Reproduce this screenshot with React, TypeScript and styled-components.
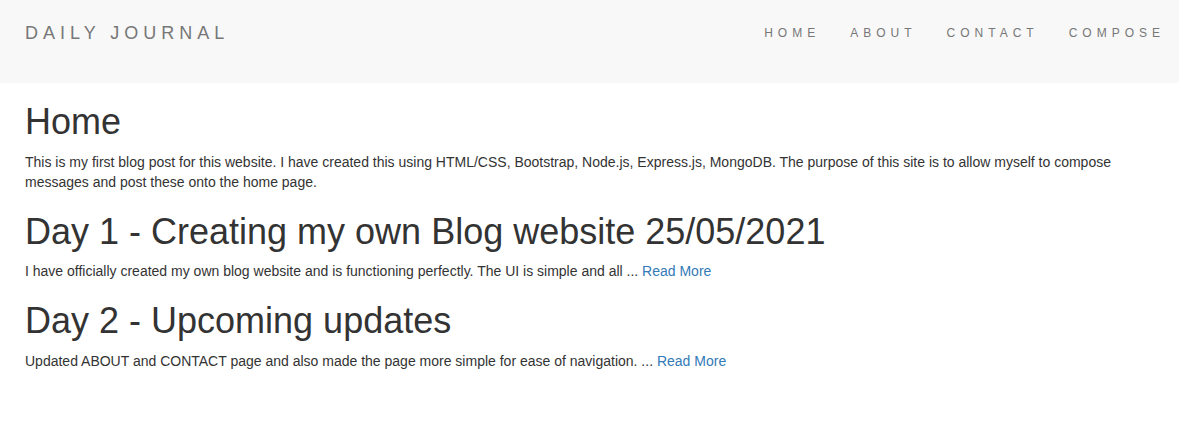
import React from "react";
import styled, { createGlobalStyle } from "styled-components";

const GlobalStyle = createGlobalStyle`
  html, body {
    margin: 0;
    padding: 0;
    background: #ffffff;
  }
  body {
    font-family: "Liberation Sans", Arial, Helvetica, sans-serif;
    font-size: 14px;
    line-height: 1.42857143;
    color: #333333;
  }
  * { box-sizing: border-box; }
`;

const Navbar = styled.nav`
  display: flex;
  justify-content: space-between;
  align-items: flex-start;
  height: 83px;
  padding: 23px 0 0 25px;
  background: #f8f8f8;
  overflow: hidden;
`;

const Brand = styled.a`
  font-size: 18px;
  line-height: 20px;
  letter-spacing: 5px;
  color: #777777;
  text-decoration: none;
  white-space: nowrap;
`;

const NavList = styled.ul`
  display: flex;
  list-style: none;
  margin: 0 -1px 0 0;
  padding: 0;
`;

const NavLink = styled.a`
  display: block;
  padding: 0 15px;
  font-size: 12px;
  line-height: 20px;
  letter-spacing: 5px;
  color: #777777;
  text-decoration: none;
  white-space: nowrap;
`;

const Main = styled.main`
  padding: 0 25px;
`;

const Title = styled.h1`
  margin: 20px 0 10px;
  font-size: 36px;
  font-weight: 500;
  line-height: 1.1;
  color: #333333;

  &:first-child {
    margin-top: 19px;
  }
`;

const Text = styled.p`
  margin: 0 0 10px;
`;

const More = styled.a`
  color: #337ab7;
  text-decoration: none;
`;

const posts = [
  {
    title: "Day 1 - Creating my own Blog website 25/05/2021",
    body: "I have officially created my own blog website and is functioning perfectly. The UI is simple and all ...",
  },
  {
    title: "Day 2 - Upcoming updates",
    body: "Updated ABOUT and CONTACT page and also made the page more simple for ease of navigation. ...",
  },
];

export default function App() {
  return (
    <>
      <GlobalStyle />
      <Navbar>
        <Brand href="#">DAILY JOURNAL</Brand>
        <NavList>
          {["HOME", "ABOUT", "CONTACT", "COMPOSE"].map((l) => (
            <li key={l}>
              <NavLink href="#">{l}</NavLink>
            </li>
          ))}
        </NavList>
      </Navbar>
      <Main>
        <Title>Home</Title>
        <Text>
          This is my first blog post for this website. I have created this using HTML/CSS, Bootstrap, Node.js, Express.js, MongoDB. The purpose of this site is to allow myself to compose messages and post these onto the home page.
        </Text>
        {posts.map((p) => (
          <React.Fragment key={p.title}>
            <Title>{p.title}</Title>
            <Text>
              {p.body} <More href="#">Read More</More>
            </Text>
          </React.Fragment>
        ))}
      </Main>
    </>
  );
}
